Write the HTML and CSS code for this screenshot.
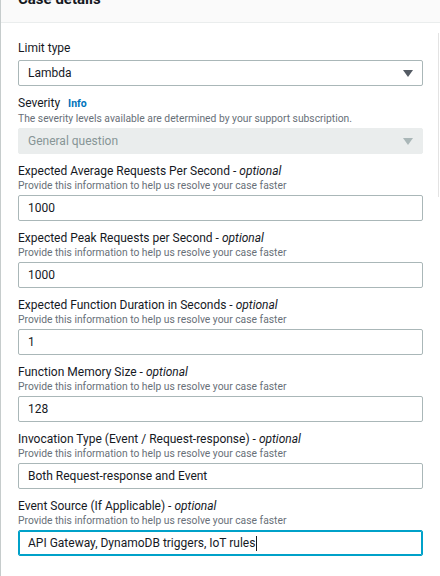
FILE: index.html
```html
<!DOCTYPE html>
<html lang="en">
<head>
<meta charset="utf-8">
<title>Case details</title>
<link rel="stylesheet" href="styles.css">
</head>
<body>
<div class="panel">
  <div class="panel-header"><h2 class="panel-title">Case details</h2></div>
  <div class="scroll-track"></div>
  <div class="panel-body">
    <div class="field field--plain">
      <div class="label">Limit type</div>
      <div class="control select">
        <span>Lambda</span>
        <svg class="caret" width="10" height="7" viewBox="0 0 10 7"><path d="M0 0H10L5 7Z"/></svg>
      </div>
    </div>
    <div class="field">
      <div class="label">Severity <a class="info">Info</a></div>
      <div class="desc">The severity levels available are determined by your support subscription.</div>
      <div class="control select select--disabled">
        <span>General question</span>
        <svg class="caret" width="10" height="7" viewBox="0 0 10 7"><path d="M0 0H10L5 7Z"/></svg>
      </div>
    </div>
    <div class="field">
      <div class="label">Expected Average Requests Per Second - <i>optional</i></div>
      <div class="desc">Provide this information to help us resolve your case faster</div>
      <div class="control input">1000</div>
    </div>
    <div class="field">
      <div class="label">Expected Peak Requests per Second - <i>optional</i></div>
      <div class="desc">Provide this information to help us resolve your case faster</div>
      <div class="control input">1000</div>
    </div>
    <div class="field">
      <div class="label">Expected Function Duration in Seconds - <i>optional</i></div>
      <div class="desc">Provide this information to help us resolve your case faster</div>
      <div class="control input">1</div>
    </div>
    <div class="field">
      <div class="label">Function Memory Size - <i>optional</i></div>
      <div class="desc">Provide this information to help us resolve your case faster</div>
      <div class="control input">128</div>
    </div>
    <div class="field">
      <div class="label">Invocation Type (Event / Request-response) - <i>optional</i></div>
      <div class="desc">Provide this information to help us resolve your case faster</div>
      <div class="control input">Both Request-response and Event</div>
    </div>
    <div class="field">
      <div class="label">Event Source (If Applicable) - <i>optional</i></div>
      <div class="desc">Provide this information to help us resolve your case faster</div>
      <div class="control input input--focus">API Gateway, DynamoDB triggers, IoT rules<span class="cursor"></span></div>
    </div>
  </div>
</div>
</body>
</html>
```
FILE: styles.css
```css
* { box-sizing: border-box; }
html, body { margin: 0; padding: 0; background: #ffffff; }
body {
  font-family: Roboto, "Liberation Sans", Arial, sans-serif;
  color: #16191f;
  width: 440px;
  height: 576px;
  overflow: hidden;
}
.panel {
  position: relative;
  border-left: 1px solid #c6cccc;
  height: 576px;
  background: #ffffff;
}
.panel-header {
  height: 23px;
  background: #fafafa;
  border-bottom: 1px solid #eaeded;
  padding: 0 17px;
  overflow: hidden;
}
.panel-title {
  margin: -12px 0 0 0;
  font-size: 15px;
  line-height: 22px;
  font-weight: 700;
  color: #16191f;
}
.scroll-track {
  position: absolute;
  right: 1px;
  top: 33px;
  width: 1px;
  height: 164px;
  background: #e3e3e3;
}
.panel-body {
  padding: 17px 17px 0 17px;
}
.field { margin-bottom: 9px; }
.label {
  font-size: 12px;
  line-height: 16px;
  color: #16191f;
}
.label i { font-style: italic; }
.field--plain .label { margin-bottom: 4px; }
.info {
  color: #0073bb;
  font-weight: 700;
  font-size: 10.5px;
  margin-left: 5px;
}
.desc {
  font-size: 10.3px;
  line-height: 14px;
  color: #687078;
  margin-bottom: 2px;
}
.control {
  height: 26px;
  border: 1px solid #aab7b8;
  border-radius: 2px;
  padding: 0 9px;
  font-size: 12px;
  line-height: 24px;
  color: #16191f;
  display: flex;
  align-items: center;
  justify-content: space-between;
}
.select .caret { fill: #545b64; }
.select--disabled {
  background: #eaeded;
  border-color: #eaeded;
  color: #879596;
}
.select--disabled .caret { fill: #aab7b8; }
.input { justify-content: flex-start; }
.input--focus {
  border-color: #00a1c9;
  box-shadow: inset 0 0 0 1px #00a1c9;
}
.cursor {
  display: inline-block;
  width: 1px;
  height: 15px;
  background: #16191f;
  margin-left: 1px;
}
```
